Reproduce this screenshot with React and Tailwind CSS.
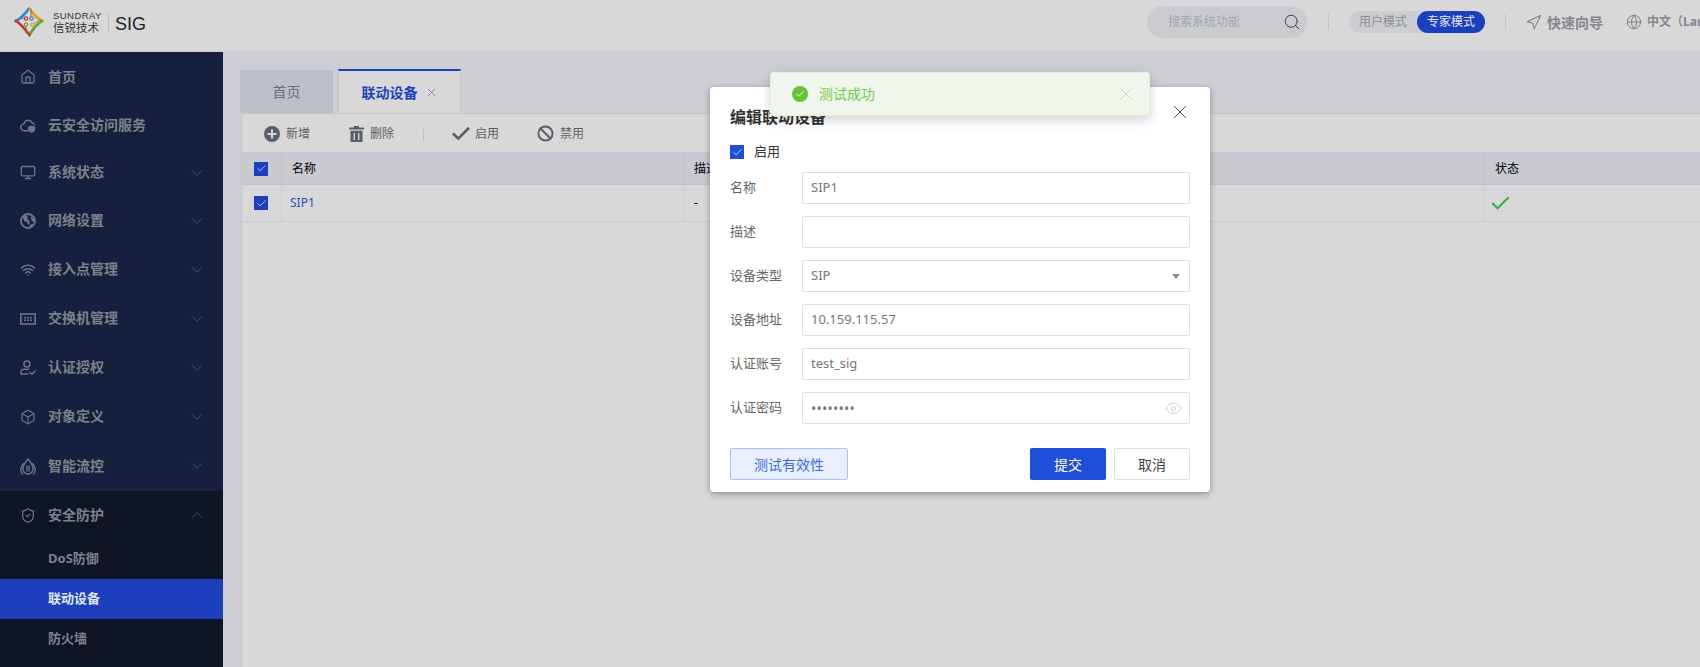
import { Home, Monitor, Wifi, Box, ChevronDown, ChevronUp, Search, Navigation, Globe, Eye, X, Check, Ban, ShieldCheck } from 'lucide-react';

function CloudShield() {
  return (
    <svg width="17" height="17" viewBox="0 0 17 17" fill="none" stroke="currentColor" strokeWidth="1.6">
      <path d="M8.500 14H4.800a3.700 3.700 0 0 1-.5-7.400 4.500 4.500 0 0 1 8.500-1 3.700 3.700 0 0 1 2.400 2.200" strokeLinecap="round" />
      <path d="M12.300 8.600l3.900 1.100v2.700c0 1.900-1.700 3.200-3.900 3.900-2.200-.7-3.900-2-3.900-3.900V9.700z" fill="currentColor" stroke="none" />
    </svg>
  );
}

function NetGlobe() {
  return (
    <svg width="16" height="16" viewBox="0 0 16 16">
      <circle cx="8" cy="8" r="7" fill="none" stroke="currentColor" strokeWidth="1.800" />
      <path d="M3 4l3-2 2 2-1 2 2 1 1 3-2 2-1-3-3-1zM11 3l3 3v3l-2-1-1-2zM9.500 12.500l3-2 .5 1.500-3 2.500z" fill="currentColor" />
    </svg>
  );
}

function SwitchIcon() {
  return (
    <svg width="16" height="16" viewBox="0 0 16 16" fill="none">
      <rect x="0.800" y="3" width="14.400" height="10" stroke="currentColor" strokeWidth="1.600" />
      <path d="M4 6h2v1.500H4zM7 6h2v1.500H7zM10 6h2v1.500h-2zM4 8.600h2v1.500H4zM7 8.600h2v1.500H7zM10 8.600h2v1.500h-2z" fill="currentColor" />
    </svg>
  );
}

function UserTick() {
  return (
    <svg width="16" height="16" viewBox="0 0 16 16" fill="none" stroke="currentColor" strokeWidth="1.500">
      <circle cx="7" cy="4" r="3" />
      <path d="M9 9.200H4a3 3 0 0 0-3 2.800v2h7" strokeLinecap="round" />
      <path d="M10 12.500l2 1.800 3-3.300" strokeLinecap="round" />
    </svg>
  );
}

function Drop() {
  return (
    <svg width="16" height="17" viewBox="0 0 16 17" fill="none" stroke="currentColor" strokeWidth="1.400" strokeLinecap="round">
      <path d="M8 1c3 3.500 5 7 5 10a5 5 0 0 1-10 0c0-3 2-6.500 5-10z" />
      <path d="M3.500 5.500C1.600 8 .7 10 .7 12c0 1.500.7 3 1.800 4M12.500 5.500c1.900 2.500 2.800 4.500 2.800 6.500 0 1.500-.7 3-1.800 4M7 8v5M9.200 8v5" />
    </svg>
  );
}

function LogoMark() {
  return (
    <svg width="32" height="32" viewBox="0 0 32 32" fill="none" strokeLinecap="round">
      <path d="M1 15Q10 9 15.500 1l1.500 2Q12 11 2.500 17z" fill="#2a86c8" />
      <path d="M17 1Q23 10 31 14.500l-2 2Q19 11 15.500 3z" fill="#e4a316" />
      <path d="M31 15Q22 21 17 31l-2-2Q19 20 29 13.500z" fill="#5cab3a" />
      <path d="M1 14.500Q9 21 16.500 31l1-2.500Q12 20 3 13z" fill="#d2322d" />
      <path d="M8 12.500h3.500M18 3v8M28 14l-7 3.500M13 27v-7" stroke="#666" strokeWidth="0.800" />
      <circle cx="13" cy="12.500" r="1.700" fill="#d8d8d8" stroke="#d2322d" strokeWidth="1.200" />
      <circle cx="18.500" cy="12.500" r="1.700" fill="#d8d8d8" stroke="#2a86c8" strokeWidth="1.200" />
      <circle cx="19.500" cy="18.500" r="1.700" fill="#d8d8d8" stroke="#e4a316" strokeWidth="1.200" />
      <circle cx="13" cy="18.500" r="1.700" fill="#d8d8d8" stroke="#5cab3a" strokeWidth="1.200" />
    </svg>
  );
}

function TrashFill() {
  return (
    <svg width="15" height="16" viewBox="0 0 15 16" fill="#5a5e69">
      <path d="M5 0h5v1.500h5V3.500H0V1.500h5zM1.500 4.800h12V16h-12zM4.600 7v7h1.300V7zM9.100 7v7h1.300V7z" fillRule="evenodd" />
    </svg>
  );
}

function PlusFill() {
  return (
    <svg width="16" height="16" viewBox="0 0 16 16">
      <circle cx="8" cy="8" r="8" fill="#5a5e69" />
      <path d="M7 3.500h2V7h3.500v2H9v3.500H7V9H3.500V7H7z" fill="#d8d8d8" />
    </svg>
  );
}

function Tick({ className }) {
  return (
    <span className={`w-[14px] h-[14px] flex items-center justify-center shrink-0 ${className}`}>
      <Check size={11} color="#fff" strokeWidth={1.500} />
    </span>
  );
}

const menu = [
  { label: '首页', icon: <Home size={20} strokeWidth={1.900} />, h: 'h-[48px]' },
  { label: '云安全访问服务', icon: <CloudShield />, h: 'h-[48px]' },
  { label: '系统状态', icon: <Monitor size={19} strokeWidth={2} />, h: 'h-[47px]', arrow: true },
  { label: '网络设置', icon: <NetGlobe />, h: 'h-[49px]', arrow: true },
  { label: '接入点管理', icon: <Wifi size={18} strokeWidth={2.200} />, h: 'h-[49px]', arrow: true },
  { label: '交换机管理', icon: <SwitchIcon />, h: 'h-[49px]', arrow: true },
  { label: '认证授权', icon: <UserTick />, h: 'h-[49px]', arrow: true },
  { label: '对象定义', icon: <Box size={20} strokeWidth={1.800} />, h: 'h-[49px]', arrow: true },
  { label: '智能流控', icon: <Drop />, h: 'h-[50px]', arrow: true },
];

const subMenu = [
  { label: 'DoS防御' },
  { label: '联动设备', active: true },
  { label: '防火墙' },
];

function Sidebar() {
  return (
    <aside className="w-[223px] shrink-0 bg-[#161f3d] pt-px text-[14px] font-bold text-[#7b818d] flex flex-col">
      {menu.map((m) => (
        <div key={m.label} className={`flex items-center pl-[20px] pr-[17px] shrink-0 ${m.h}`}>
          <span className="w-[16px] flex justify-center text-[#6d7583]">{m.icon}</span>
          <span className="ml-[12px] -mt-[2px]">{m.label}</span>
          {m.arrow && <ChevronDown size={18} strokeWidth={1} className="ml-auto text-[#5b6373]" />}
        </div>
      ))}
      <div className="flex-1 bg-[#0f1525]">
        <div className="flex items-center h-[48px] pl-[20px] pr-[17px]">
          <span className="w-[16px] flex justify-center text-[#6d7583]"><ShieldCheck size={19} strokeWidth={1.800} /></span>
          <span className="ml-[12px] -mt-[2px]">安全防护</span>
          <ChevronUp size={18} strokeWidth={1} className="ml-auto text-[#5b6373]" />
        </div>
        {subMenu.map((s) => (
          <div key={s.label} className={`h-[40px] flex items-center pl-[48px] text-[13px] ${s.active ? 'bg-[#1b3fbd] text-[#dfe5f2]' : ''}`}>
            {s.label}
          </div>
        ))}
      </div>
    </aside>
  );
}

function Header() {
  return (
    <header className="h-[52px] shrink-0 bg-[#d8d8d8] border-b border-[#cdcfd4] pb-[7px] flex items-center">
      <div className="ml-[13px]"><LogoMark /></div>
      <div className="ml-[8px] w-[48px] flex flex-col text-[#333] leading-none">
        <span className="text-[9.500px] tracking-[.45px] font-['Liberation_Sans',sans-serif]">SUNDRAY</span>
        <span className="text-[11.500px] mt-[1px]">信锐技术</span>
      </div>
      <div className="ml-[7px] w-px h-[20px] bg-[#c0c0c0]" />
      <span className="ml-[6px] mt-[4px] text-[18px] text-[#222] font-['Liberation_Sans',sans-serif]">SIG</span>

      <div className="ml-auto w-[160px] h-[32px] rounded-full bg-[#c9cbd1] flex items-center pl-[21px] pr-[6px] text-[12px] text-[#a3a5ab]">
        搜索系统功能
        <Search size={18} strokeWidth={1.300} className="ml-auto text-[#3e3e3e]" />
      </div>
      <div className="ml-[21px] w-px h-[16px] bg-[#c3c3c3]" />
      <div className="ml-[20px] w-[136px] h-[22px] rounded-full bg-[#cbcdd2] flex items-center text-[12px] text-[#8a8c92]">
        <span className="w-[68px] text-center">用户模式</span>
        <span className="w-[68px] h-full rounded-full bg-[#1b3fbd] text-[#e6e9f4] flex items-center justify-center">专家模式</span>
      </div>
      <div className="ml-[20px] w-px h-[16px] bg-[#c3c3c3]" />
      <div className="ml-[19px] w-[175px] shrink-0 flex items-center text-[14px] font-bold text-[#85878f] whitespace-nowrap">
        <Navigation size={17} strokeWidth={1.500} className="shrink-0 text-[#7d818c]" />
        <span className="ml-[5px]">快速向导</span>
        <Globe size={16} strokeWidth={1.500} className="ml-[23px] shrink-0 text-[#7d818c]" />
        <span className="ml-[5px] text-[12px]">中文（Language）</span>
      </div>
    </header>
  );
}

function Tool({ icon, label, className = '' }) {
  return (
    <div className={`flex items-center ${className}`}>
      {icon}
      <span>{label}</span>
    </div>
  );
}

function Content() {
  return (
    <main className="flex-1 min-w-0 bg-[#ccced3] pt-[17px] pl-[17px] flex flex-col">
      <div className="flex items-end h-[44px] shrink-0 text-[14px]">
        <div className="w-[93px] h-[43px] bg-[#bcbfc8] text-[#6a6d75] flex items-center justify-center">首页</div>
        <div className="ml-[5px] w-[123px] h-[44px] border-t-2 border-x border-t-[#1b3fbd] border-x-[#c5c7cd] bg-[#d8d8d8] flex items-center justify-center text-[#1b3fbd] font-bold">
          联动设备
          <X size={13} strokeWidth={1.300} className="ml-[7px] text-[#5e6fae]" />
        </div>
      </div>
      <div className="flex-1 ml-px border-l border-t border-[#c4c6cc] bg-[#d8d8d8] text-[12px]">
        <div className="h-[39px] flex items-center pl-[22px] pt-px text-[#5c5e63] border-b border-[#c9cacf]">
          <Tool icon={<PlusFill />} label="新增" className="gap-[6px]" />
          <Tool icon={<TrashFill />} label="删除" className="ml-[39px] gap-[6px]" />
          <div className="ml-[29px] w-px h-[14px] bg-[#c0c1c6]" />
          <Tool icon={<Check size={22} strokeWidth={2.800} className="text-[#5a5e69]" />} label="启用" className="ml-[26px] gap-[3px]" />
          <Tool icon={<Ban size={17} strokeWidth={2.800} className="text-[#5a5e69]" />} label="禁用" className="ml-[38px] gap-[6px]" />
        </div>
        <div className="h-[32px] flex items-center bg-[#c8cad0] border-b border-[#bfc1c9] text-black">
          <div className="w-[40px] h-full border-r border-[#bfc1c9] flex items-center pl-[12px]"><Tick className="bg-[#1b3fbd]" /></div>
          <div className="w-[402px] h-full border-r border-[#bfc1c9] flex items-center pl-[10px]">名称</div>
          <div className="w-[801px] h-full border-r border-[#bfc1c9] flex items-center pl-[10px]">描述</div>
          <div className="pl-[10px]">状态</div>
        </div>
        <div className="h-[37px] flex items-center border-b border-[#c9cacf]">
          <div className="w-[40px] h-full border-r border-[#cccdd2] flex items-center pl-[12px]"><Tick className="bg-[#1b3fbd]" /></div>
          <div className="w-[402px] h-full border-r border-[#cccdd2] flex items-center pl-[8px] text-[#2b4dbb]">SIP1</div>
          <div className="w-[801px] h-full border-r border-[#cccdd2] flex items-center pl-[10px] text-black">-</div>
          <div className="pl-[4px]"><Check size={23} strokeWidth={2.200} className="text-[#35b34d]" /></div>
        </div>
      </div>
    </main>
  );
}

const fields = [
  { label: '名称', value: 'SIP1' },
  { label: '描述', value: '' },
  { label: '设备类型', value: 'SIP', select: true },
  { label: '设备地址', value: '10.159.115.57' },
  { label: '认证账号', value: 'test_sig' },
  { label: '认证密码', value: '••••••••', password: true },
];

function Dialog() {
  return (
    <div className="absolute left-[710px] top-[87px] w-[500px] h-[405px] bg-white rounded-[4px] shadow-[0_2px_6px_rgba(0,0,0,0.35)] px-[20px] pt-[18px]">
      <div className="flex items-start justify-between">
        <h3 className="text-[16px] leading-[24px] font-bold text-[#333]">编辑联动设备</h3>
        <X size={22} strokeWidth={1} className="-mt-[4px] -mr-[1px] text-[#333]" />
      </div>
      <div className="mt-[16px] h-[14px] flex items-center gap-[10px] text-[13px] text-[#333]">
        <Tick className="bg-[#1f4fd8]" />
        启用
      </div>
      <div className="mt-[13px] flex flex-col gap-[12px]">
        {fields.map((f) => (
          <div key={f.label} className="flex items-center h-[32px]">
            <label className="w-[72px] text-[13px] text-[#666]">{f.label}</label>
            <div className="flex-1 h-full border border-[#dddde6] rounded-[2px] flex items-center pl-[8px] pr-[7px] text-[13px] text-[#777]">
              <span className={f.password ? 'text-[14px] tracking-[.25px]' : ''}>{f.value}</span>
              {f.select && <span className="ml-auto mr-[2px] w-0 h-0 border-x-[4px] border-x-transparent border-t-[5px] border-t-[#8c8c96]" />}
              {f.password && <Eye size={17} strokeWidth={1.200} className="ml-auto text-[#c8c8cf]" />}
            </div>
          </div>
        ))}
      </div>
      <div className="mt-[24px] flex items-center text-[14px]">
        <button className="w-[118px] h-[32px] rounded-[2px] bg-[#e8effe] border border-[#a9c1f7] text-[#3f6ae0]">测试有效性</button>
        <button className="ml-auto w-[76px] h-[32px] rounded-[2px] bg-[#1f4fd8] text-white">提交</button>
        <button className="ml-[8px] w-[76px] h-[32px] rounded-[2px] bg-white border border-[#dddde6] text-[#444]">取消</button>
      </div>
    </div>
  );
}

function Toast() {
  return (
    <div className="absolute left-[770px] top-[72px] w-[380px] h-[44px] bg-[#eff7ec] border border-[#dff0d6] rounded-[3px] shadow-[0_4px_12px_rgba(0,0,0,0.18)] flex items-center pl-[21px] pr-[12px] text-[14px] text-[#71c84c]">
      <span className="w-[16px] h-[16px] rounded-full bg-[#67c23a] flex items-center justify-center">
        <Check size={10} color="#fff" strokeWidth={2} />
      </span>
      <span className="ml-[11px] -mt-[2px]">测试成功</span>
      <X size={22} strokeWidth={1} className="ml-auto text-[#c8cfc8]" />
    </div>
  );
}

export default function App() {
  return (
    <div className="relative h-screen w-full overflow-hidden flex flex-col font-['Noto_Sans','Noto_Sans_CJK_SC',sans-serif]">
      <Header />
      <div className="flex-1 min-h-0 flex">
        <Sidebar />
        <Content />
      </div>
      <Dialog />
      <Toast />
    </div>
  );
}
